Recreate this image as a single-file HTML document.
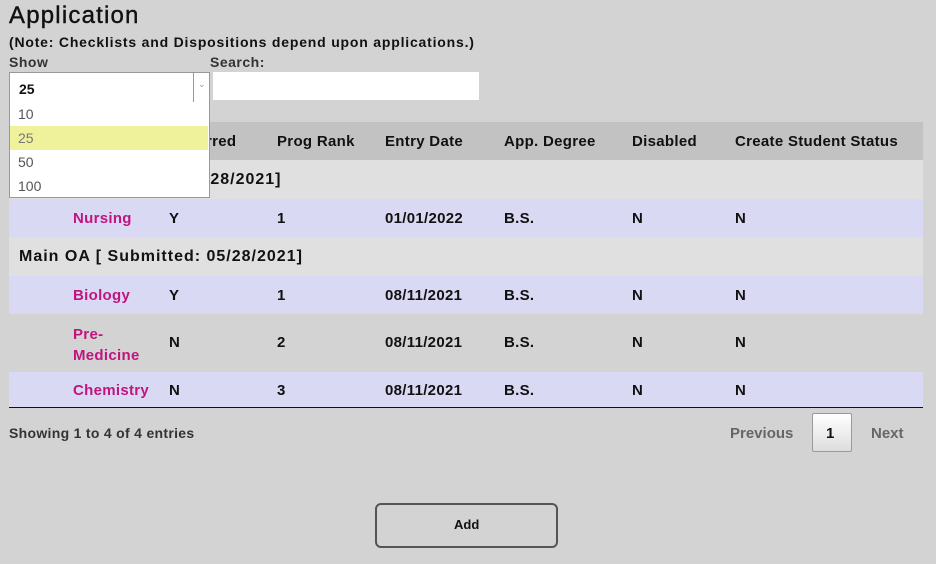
<!DOCTYPE html>
<html><head><style>
body{margin:0;width:936px;height:564px;background:#d3d3d3;font-family:"Liberation Sans",sans-serif;position:relative;overflow:hidden;color:#111}
.a{position:absolute;white-space:nowrap}
.b{font-weight:bold}
.row{position:absolute;left:9px;width:914px}
.t{position:absolute;font-size:15px;font-weight:bold;white-space:nowrap;letter-spacing:0.3px}
.p{color:#c0157f}
</style></head><body>
<div class="a" style="left:9px;top:2px;font-size:24px;letter-spacing:1.2px;-webkit-text-stroke:0.4px #111">Application</div>
<div class="a b" style="left:9px;top:34px;font-size:14px;letter-spacing:0.8px">(Note: Checklists and Dispositions depend upon applications.)</div>
<div class="a b" style="left:9px;top:54px;font-size:14px;color:#333;letter-spacing:0.5px">Show</div>
<div class="a b" style="left:210px;top:54px;font-size:14px;color:#333;letter-spacing:0.5px">Search:</div>
<div class="a" style="left:213px;top:72px;width:266px;height:28px;background:#fff"></div>

<div class="row" style="top:122px;height:38px;background:#c2c2c2"></div>
<div class="row" style="top:160px;height:39px;background:#e0e0e0"></div>
<div class="row" style="top:199px;height:38px;background:#dad9f3"></div>
<div class="row" style="top:237px;height:39px;background:#e0e0e0"></div>
<div class="row" style="top:276px;height:38px;background:#dad9f3"></div>
<div class="row" style="top:372px;height:36px;background:#dad9f3"></div>
<div class="row" style="top:407px;height:1px;background:#111"></div>

<div class="t" style="left:206px;top:133px">rred</div>
<div class="t" style="left:277px;top:133px">Prog Rank</div>
<div class="t" style="left:385px;top:133px">Entry Date</div>
<div class="t" style="left:504px;top:133px">App. Degree</div>
<div class="t" style="left:632px;top:133px">Disabled</div>
<div class="t" style="left:735px;top:133px">Create Student Status</div>

<div class="t" style="left:195px;top:171px;font-size:16px;letter-spacing:1px">5/28/2021]</div>
<div class="t" style="left:19px;top:248px;font-size:16px;letter-spacing:1px">Main OA [ Submitted: 05/28/2021]</div>

<div class="t p" style="left:73px;top:210px">Nursing</div><div class="t" style="left:169px;top:210px">Y</div><div class="t" style="left:277px;top:210px">1</div><div class="t" style="left:385px;top:210px">01/01/2022</div><div class="t" style="left:504px;top:210px">B.S.</div><div class="t" style="left:632px;top:210px">N</div><div class="t" style="left:735px;top:210px">N</div>

<div class="t p" style="left:73px;top:324px;line-height:21px">Pre-<br>Medicine</div><div class="t" style="left:169px;top:334px">N</div><div class="t" style="left:277px;top:334px">2</div><div class="t" style="left:385px;top:334px">08/11/2021</div><div class="t" style="left:504px;top:334px">B.S.</div><div class="t" style="left:632px;top:334px">N</div><div class="t" style="left:735px;top:334px">N</div>

<div class="t p" style="left:73px;top:287px">Biology</div><div class="t" style="left:169px;top:287px">Y</div><div class="t" style="left:277px;top:287px">1</div><div class="t" style="left:385px;top:287px">08/11/2021</div><div class="t" style="left:504px;top:287px">B.S.</div><div class="t" style="left:632px;top:287px">N</div><div class="t" style="left:735px;top:287px">N</div>

<div class="t p" style="left:73px;top:382px">Chemistry</div><div class="t" style="left:169px;top:382px">N</div><div class="t" style="left:277px;top:382px">3</div><div class="t" style="left:385px;top:382px">08/11/2021</div><div class="t" style="left:504px;top:382px">B.S.</div><div class="t" style="left:632px;top:382px">N</div><div class="t" style="left:735px;top:382px">N</div>

<!-- dropdown -->
<div class="a" style="left:9px;top:72px;width:199px;height:29px;background:#fff;border:1px solid #999"></div>
<div class="a" style="left:193px;top:73px;width:1px;height:29px;background:#999"></div>
<div class="a" style="left:198px;top:79px;font-size:9px;color:#999">&#8964;</div>
<div class="a b" style="left:19px;top:81px;font-size:14px">25</div>
<div class="a" style="left:9px;top:102px;width:199px;height:95px;background:#fff;border:1px solid #999;border-top:none"></div>
<div class="a" style="left:10px;top:126px;width:198px;height:24px;background:#eff29a"></div>
<div class="a" style="left:18px;top:106px;font-size:14px;color:#555">10</div>
<div class="a" style="left:18px;top:130px;font-size:14px;color:#777">25</div>
<div class="a" style="left:18px;top:154px;font-size:14px;color:#555">50</div>
<div class="a" style="left:18px;top:178px;font-size:14px;color:#555">100</div>

<div class="a b" style="left:9px;top:425px;font-size:14px;color:#333;letter-spacing:0.3px">Showing 1 to 4 of 4 entries</div>
<div class="a b" style="left:730px;top:425px;font-size:15px;color:#666">Previous</div>
<div class="a" style="left:812px;top:413px;width:38px;height:37px;border:1px solid #999;border-radius:2px;background:linear-gradient(#fff,#ddd)"></div>
<div class="a b" style="left:826px;top:425px;font-size:15px">1</div>
<div class="a b" style="left:871px;top:425px;font-size:15px;color:#666">Next</div>

<div class="a" style="left:375px;top:503px;width:179px;height:41px;border:2px solid #555;border-radius:6px;background:#d3d3d3"></div>
<div class="a b" style="left:454px;top:517px;font-size:13px">Add</div>
</body></html>
